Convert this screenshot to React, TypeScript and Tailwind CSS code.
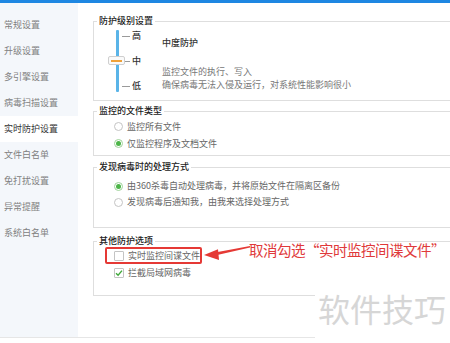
import type { ReactNode } from 'react'

const NAV_ITEMS = [
  '常规设置',
  '升级设置',
  '多引擎设置',
  '病毒扫描设置',
  '实时防护设置',
  '文件白名单',
  '免打扰设置',
  '异常提醒',
  '系统白名单',
]

const ACTIVE_NAV = '实时防护设置'

function Radio({ checked }: { checked?: boolean }) {
  return (
    <span
      className={`flex items-center justify-center w-[9px] h-[9px] rounded-full border bg-white shrink-0 ${
        checked ? 'border-[#9fd39a]' : 'border-[#c4c4c4]'
      }`}
    >
      {checked && <span className="w-[5px] h-[5px] rounded-full bg-[#4cb548]" />}
    </span>
  )
}

function Checkbox({ checked }: { checked?: boolean }) {
  return (
    <span className="flex items-center justify-center w-[10px] h-[10px] border border-[#c4c4c4] bg-white rounded-[1px] shrink-0">
      {checked && (
        <svg width="8" height="8" viewBox="0 0 8 8">
          <path d="M1 4.2 L3.1 6.2 L7 1.6" fill="none" stroke="#3fa83a" strokeWidth="1.4" />
        </svg>
      )}
    </span>
  )
}

function Group({ title, className, children }: { title: string; className: string; children: ReactNode }) {
  return (
    <fieldset className={`border border-[#dedede] w-[380px] ${className}`}>
      <legend className="ml-[3px] px-[2px] text-[9px] leading-[12px] text-[#222] font-medium">{title}</legend>
      {children}
    </fieldset>
  )
}

function Level() {
  return (
    <div className="flex items-start h-[73px]">
      {/* slider */}
      <div className="relative flex mt-[3px] ml-[22px]">
        <div className="w-[3px] h-[62px] bg-[#5ab4e8] rounded-[1px]" />
        <div className="flex flex-col justify-between h-[62px] ml-[3px]">
          {['高', '中', '低'].map((l) => (
            <div key={l} className="flex items-center h-[12px]">
              <span className="w-[8px] h-px bg-[#9a9a9a]" />
              <span className="ml-[2px] text-[9px] leading-[12px] text-[#333] font-medium">{l}</span>
            </div>
          ))}
        </div>
        <div className="absolute left-[-8px] top-[26px] w-[17px] h-[9px] rounded-[2px] border border-[#cfcfcf] bg-[#fafafa] flex items-center justify-center">
          <span className="w-[11px] h-[2px] bg-[#f0a23a]" />
        </div>
      </div>
      <div className="ml-[21px] mt-[10px] flex flex-col">
        <span className="text-[9px] leading-[12px] text-[#333] font-medium">中度防护</span>
        <span className="mt-[16px] text-[9px] leading-[13px] text-[#777]">监控文件的执行、写入</span>
        <span className="text-[9px] leading-[13px] text-[#777]">确保病毒无法入侵及运行，对系统性能影响很小</span>
      </div>
    </div>
  )
}

function Option({ children, control, h }: { children: ReactNode; control: ReactNode; h: string }) {
  return (
    <div className={`flex items-center pl-[20px] ${h}`}>
      {control}
      <span className="ml-[4px] text-[9px] leading-[12px] text-[#666]">{children}</span>
    </div>
  )
}

export default function App() {
  return (
    <div className="relative w-[450px] h-[343px] overflow-hidden bg-white flex flex-col font-['Noto_Sans_CJK_SC',sans-serif]">
      <div className="h-[3px] bg-[#1e87e2] shrink-0" />

      <div className="flex h-[334px] shrink-0">
        {/* Sidebar */}
        <nav className="w-[78px] bg-[#f4f7fb] pt-[9px] flex flex-col shrink-0">
          {NAV_ITEMS.map((item) => (
            <div
              key={item}
              className={`h-[26px] flex items-center pl-[4px] text-[9px] ${
                item === ACTIVE_NAV ? 'bg-white text-[#333]' : 'text-[#808080]'
              }`}
            >
              {item}
            </div>
          ))}
        </nav>

        {/* Settings */}
        <main className="flex-1 overflow-hidden pl-[15px] pt-[12px] flex flex-col">
          <Group title="防护级别设置" className="">
            <Level />
          </Group>

          <Group title="监控的文件类型" className="mt-[4px] pt-[1px] pb-[3px]">
            <Option h="h-[17px]" control={<Radio />}>监控所有文件</Option>
            <Option h="h-[17px]" control={<Radio checked />}>仅监控程序及文档文件</Option>
          </Group>

          <Group title="发现病毒时的处理方式" className="mt-[5px] pt-[5px] pb-[17px]">
            <Option h="h-[16px]" control={<Radio checked />}>由360杀毒自动处理病毒，并将原始文件在隔离区备份</Option>
            <Option h="h-[16px]" control={<Radio />}>发现病毒后通知我，由我来选择处理方式</Option>
          </Group>

          <Group title="其他防护选项" className="mt-[7px] pb-[14px]">
            <div className="ml-[11px] w-fit h-[17px] flex items-center pl-[7px] border-2 border-[#e53935] rounded-[2px]">
              <Checkbox />
              <span className="ml-[4px] text-[9px] leading-[12px] text-[#666]">实时监控间谍文件</span>
            </div>
            <Option h="h-[17px]" control={<Checkbox checked />}>拦截局域网病毒</Option>
          </Group>
        </main>
      </div>

      <div className="h-px bg-[#e6e6e6] shrink-0" />

      {/* Annotation */}
      <svg className="absolute left-[200px] top-[240px]" width="55" height="25" viewBox="0 0 55 25">
        <polygon points="4,15 18,9.2 19,20" fill="#e53935" />
        <polygon points="15,12.6 50,6 50,7.4 15,15.4" fill="#e53935" />
      </svg>
      <span className="absolute left-[249px] top-[241px] text-[14.5px] leading-[18px] tracking-[-0.5px] whitespace-nowrap text-[#e0393a]">
        取消勾选“实时监控间谍文件”
      </span>

      {/* Watermark */}
      <div className="absolute left-[315px] top-[290px] w-[135px] h-[53px] bg-white flex items-start pt-[1px] pl-[3px]">
        <span className="text-[32px] leading-[34px] text-[#d6d6d6] whitespace-nowrap">软件技巧</span>
      </div>
    </div>
  )
}
